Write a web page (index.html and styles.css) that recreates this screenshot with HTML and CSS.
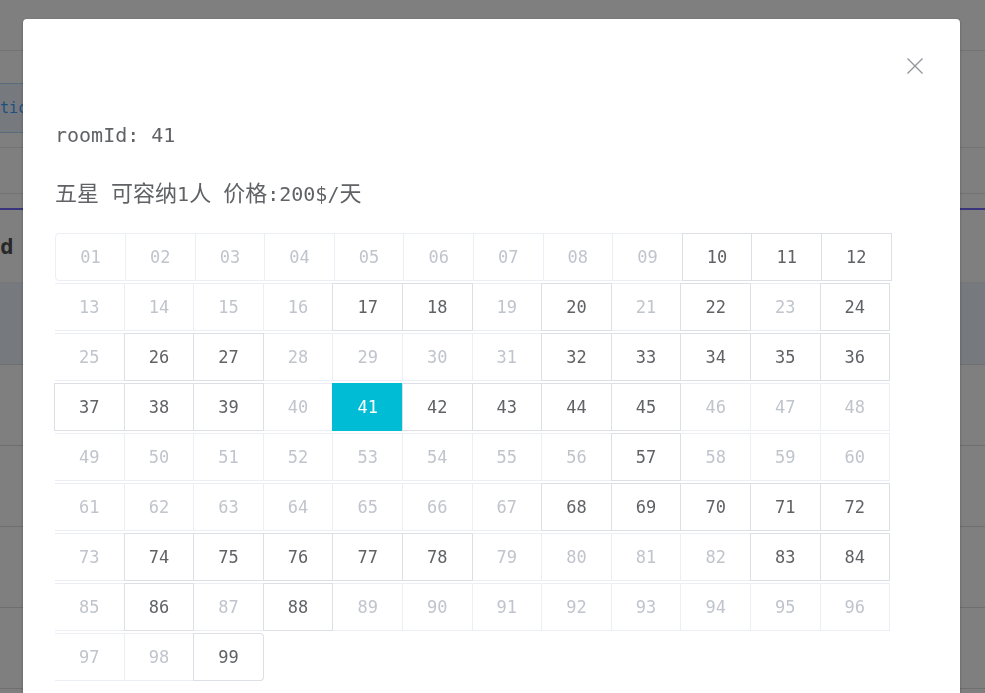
FILE: index.html
```html
<!DOCTYPE html>
<html lang="zh">
<head>
<meta charset="utf-8">
<title>Room</title>
<link rel="stylesheet" href="styles.css">
</head>
<body>
<div class="page">
  <div class="topbar"></div>
  <div class="toolbar"><span class="btn">tic</span></div>
  <div class="filters"></div>
  <div class="tabs"></div>
  <div class="thead"><span class="th">Id</span></div>
  <div class="trow hover"></div>
  <div class="trow"></div>
  <div class="trow"></div>
  <div class="trow"></div>
  <div class="trow"></div>
</div>

<div class="overlay">
  <div class="dialog">
    <div class="dialog-header">
      <button class="close" aria-label="Close">
        <svg width="16" height="16" viewBox="0 0 16 16"><path d="M0.5 0.5 L15.5 15.5 M15.5 0.5 L0.5 15.5" stroke="#909399" stroke-width="1.3" fill="none"/></svg>
      </button>
    </div>
    <div class="dialog-body">
      <p class="line id-line">roomId: 41</p>
      <p class="line info-line"><span class="cjk">五星</span> <span class="cjk">可容纳</span>1<span class="cjk">人</span> <span class="cjk">价格</span>:200$/<span class="cjk">天</span></p>
      <div class="rooms">
        <span class="c off first">01</span><span class="c off">02</span><span class="c off">03</span><span class="c off">04</span><span class="c off">05</span><span class="c off">06</span><span class="c off">07</span><span class="c off">08</span><span class="c off">09</span><span class="c on">10</span><span class="c on">11</span><span class="c on">12</span>
        <span class="c off">13</span><span class="c off">14</span><span class="c off">15</span><span class="c off">16</span><span class="c on">17</span><span class="c on">18</span><span class="c off">19</span><span class="c on">20</span><span class="c off">21</span><span class="c on">22</span><span class="c off">23</span><span class="c on">24</span>
        <span class="c off">25</span><span class="c on">26</span><span class="c on">27</span><span class="c off">28</span><span class="c off">29</span><span class="c off">30</span><span class="c off">31</span><span class="c on">32</span><span class="c on">33</span><span class="c on">34</span><span class="c on">35</span><span class="c on">36</span>
        <span class="c on">37</span><span class="c on">38</span><span class="c on">39</span><span class="c off">40</span><span class="c sel">41</span><span class="c on">42</span><span class="c on">43</span><span class="c on">44</span><span class="c on">45</span><span class="c off">46</span><span class="c off">47</span><span class="c off">48</span>
        <span class="c off">49</span><span class="c off">50</span><span class="c off">51</span><span class="c off">52</span><span class="c off">53</span><span class="c off">54</span><span class="c off">55</span><span class="c off">56</span><span class="c on">57</span><span class="c off">58</span><span class="c off">59</span><span class="c off">60</span>
        <span class="c off">61</span><span class="c off">62</span><span class="c off">63</span><span class="c off">64</span><span class="c off">65</span><span class="c off">66</span><span class="c off">67</span><span class="c on">68</span><span class="c on">69</span><span class="c on">70</span><span class="c on">71</span><span class="c on">72</span>
        <span class="c off">73</span><span class="c on">74</span><span class="c on">75</span><span class="c on">76</span><span class="c on">77</span><span class="c on">78</span><span class="c off">79</span><span class="c off">80</span><span class="c off">81</span><span class="c off">82</span><span class="c on">83</span><span class="c on">84</span>
        <span class="c off">85</span><span class="c on">86</span><span class="c off">87</span><span class="c on">88</span><span class="c off">89</span><span class="c off">90</span><span class="c off">91</span><span class="c off">92</span><span class="c off">93</span><span class="c off">94</span><span class="c off">95</span><span class="c off">96</span>
        <span class="c off">97</span><span class="c off">98</span><span class="c on last">99</span>
      </div>
    </div>
  </div>
</div>
</body>
</html>
```
FILE: styles.css
```css
* { box-sizing: border-box; }
html, body { margin: 0; padding: 0; height: 100%; overflow: hidden; }
body {
  background: #ffffff;
  font-family: "DejaVu Sans Mono", "Liberation Mono", "Noto Sans CJK SC", monospace;
  color: #606266;
}

/* ---------- page behind the dialog ---------- */
.page { width: 100%; }
.topbar { height: 51px; border-bottom: 1px solid #e6e6e6; }
.toolbar {
  height: 97px;
  padding-top: 32px;
  border-bottom: 1px solid #e6e6e6;
}
.btn {
  display: inline-flex;
  align-items: center;
  height: 50px;
  margin-left: -20px;
  padding: 0 20px 0 19px;
  background: #ecf5ff;
  border: 1px solid #b3d8ff;
  border-radius: 4px;
  color: #409eff;
  font-size: 15px;
}
.filters { height: 46px; border-bottom: 1px solid #e6e6e6; }
.tabs { height: 16px; border-bottom: 2px solid #7468ff; }
.thead {
  height: 73px;
  display: flex;
  align-items: center;
  border-bottom: 1px solid #ebeef5;
}
.th {
  margin-left: -13px;
  font-size: 22px;
  font-weight: bold;
  color: #505050;
}
.trow { height: 81px; border-bottom: 1px solid #dedede; }
.trow.hover { height: 82px; background: #ecf5ff; }

/* ---------- overlay & dialog ---------- */
.overlay {
  position: fixed;
  inset: 0;
  background: rgba(0, 0, 0, 0.5);
  padding: 19px 0 0 23px;
}
.dialog {
  position: relative;
  width: 937px;
  height: 720px;
  background: #ffffff;
  border-radius: 4px;
  box-shadow: 0 1px 3px rgba(0, 0, 0, 0.3);
}
.dialog-header { height: 101px; }
.close {
  position: absolute;
  top: 39px;
  right: 37px;
  width: 16px;
  height: 16px;
  padding: 0;
  border: 0;
  background: none;
  display: flex;
}
.dialog-body { padding: 0 0 0 32px; }

.line {
  margin: 0;
  font-size: 20px;
  line-height: 30px;
  height: 30px;
  color: #606266;
  white-space: nowrap;
}
.info-line { margin-top: 29px; }
.cjk {
  font-family: "Noto Sans CJK SC", sans-serif;
  font-size: 22px;
  line-height: 20px;
}

/* ---------- room grid ---------- */
.rooms {
  margin-top: 24px;
  width: 840px;
  display: flex;
  flex-wrap: wrap;
  row-gap: 2px;
}
.c {
  width: 69.6px;
  height: 48px;
  display: flex;
  align-items: center;
  justify-content: center;
  font-size: 17px;
  border: 1px solid #ebeef5;
  border-left: 0;
  background: #ffffff;
}
.c.off { color: #c0c4cc; border-color: #ebeef5; }
.c.on {
  color: #606266;
  border-color: #dcdfe6;
  box-shadow: -1px 0 0 0 #dcdfe6;
}
.c.sel {
  color: #ffffff;
  background: #00bcd4;
  border-color: #00bcd4;
  box-shadow: -1px 0 0 0 #00bcd4;
}
.c.first {
  width: 71px;
  border-left: 1px solid #ebeef5;
  border-radius: 4px 0 0 4px;
}
.c.last { border-radius: 0 4px 4px 0; }
```
